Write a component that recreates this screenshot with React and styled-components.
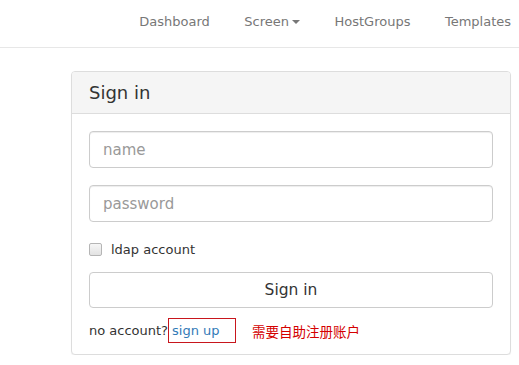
import React from "react";
import styled, { createGlobalStyle } from "styled-components";

const GlobalStyle = createGlobalStyle`
  html, body {
    margin: 0;
    padding: 0;
    background: #fff;
    font-family: "DejaVu Sans", Verdana, sans-serif;
    color: #333;
  }
  * {
    box-sizing: border-box;
  }
`;

const NavBar = styled.nav`
  height: 48px;
  border-bottom: 1px solid #e7e7e7;
  display: flex;
  justify-content: flex-end;
  align-items: flex-start;
  gap: 34.5px;
  padding: 14px 8px 0 0;
`;

const NavLink = styled.a`
  display: flex;
  align-items: center;
  font-size: 13px;
  line-height: 15px;
  color: #777;
  text-decoration: none;
  white-space: nowrap;
  cursor: pointer;
`;

const Caret = styled.span`
  display: inline-block;
  width: 0;
  height: 0;
  margin-left: 3px;
  margin-top: 1px;
  border-top: 4px solid #777;
  border-left: 4px solid transparent;
  border-right: 4px solid transparent;
`;

const Main = styled.main`
  padding: 23px 9px 0 71px;
`;

const Panel = styled.section`
  width: 440px;
  border: 1px solid #ddd;
  border-radius: 4px;
  background: #fff;
  box-shadow: 0 1px 1px rgba(0, 0, 0, 0.05);
`;

const PanelHeading = styled.header`
  height: 42px;
  display: flex;
  align-items: center;
  padding: 0 17px;
  background: #f5f5f5;
  border-bottom: 1px solid #ddd;
  border-radius: 3px 3px 0 0;
`;

const PanelTitle = styled.h3`
  margin: 0;
  font-size: 18px;
  font-weight: normal;
  color: #333;
`;

const PanelBody = styled.form`
  display: flex;
  flex-direction: column;
  padding: 17px 17px 11px;
`;

const TextInput = styled.input`
  height: 37px;
  width: 100%;
  padding: 0 13px;
  border: 1px solid #ccc;
  border-radius: 4px;
  font-family: inherit;
  font-size: 15px;
  color: #555;
  box-shadow: inset 0 1px 1px rgba(0, 0, 0, 0.075);
  outline: none;
  margin-bottom: ${(props) => props.$gap || 0}px;

  &::placeholder {
    color: #999;
  }
`;

const CheckRow = styled.label`
  display: flex;
  align-items: center;
  height: 20px;
  margin-top: 17px;
  font-size: 13px;
  color: #333;
  gap: 9px;
`;

const CheckBox = styled.input.attrs({ type: "checkbox" })`
  appearance: none;
  margin: 0;
  width: 13px;
  height: 13px;
  border: 1px solid #b5b5b5;
  border-radius: 2px;
  background: linear-gradient(#f6f6f6, #e2e2e2);
`;

const SubmitButton = styled.button`
  margin-top: 13px;
  height: 36px;
  width: 100%;
  border: 1px solid #ccc;
  border-radius: 4px;
  background: #fff;
  font-family: inherit;
  font-size: 15.5px;
  color: #333;
  cursor: pointer;
`;

const FooterRow = styled.div`
  display: flex;
  align-items: center;
  margin-top: 10px;
  font-size: 13px;
  color: #333;
`;

const SignUpBox = styled.span`
  display: flex;
  align-items: center;
  height: 25px;
  width: 68px;
  padding-left: 3px;
  border: 1px solid #c8161d;
`;

const SignUpLink = styled.a`
  color: #337ab7;
  text-decoration: none;
  cursor: pointer;
`;

const Note = styled.span`
  margin-left: 16px;
  font-family: "Noto Sans CJK SC", "DejaVu Sans", sans-serif;
  font-size: 13.5px;
  color: #d40000;
`;

const navItems = [
  { label: "Dashboard" },
  { label: "Screen", dropdown: true },
  { label: "HostGroups" },
  { label: "Templates" },
];

export default function App() {
  return (
    <>
      <GlobalStyle />
      <NavBar>
        {navItems.map((item) => (
          <NavLink key={item.label}>
            {item.label}
            {item.dropdown && <Caret />}
          </NavLink>
        ))}
      </NavBar>
      <Main>
        <Panel>
          <PanelHeading>
            <PanelTitle>Sign in</PanelTitle>
          </PanelHeading>
          <PanelBody onSubmit={(e) => e.preventDefault()}>
            <TextInput placeholder="name" $gap={17} />
            <TextInput type="password" placeholder="password" />
            <CheckRow>
              <CheckBox />
              ldap account
            </CheckRow>
            <SubmitButton type="submit">Sign in</SubmitButton>
            <FooterRow>
              no account?
              <SignUpBox>
                <SignUpLink>sign up</SignUpLink>
              </SignUpBox>
              <Note>需要自助注册账户</Note>
            </FooterRow>
          </PanelBody>
        </Panel>
      </Main>
    </>
  );
}
